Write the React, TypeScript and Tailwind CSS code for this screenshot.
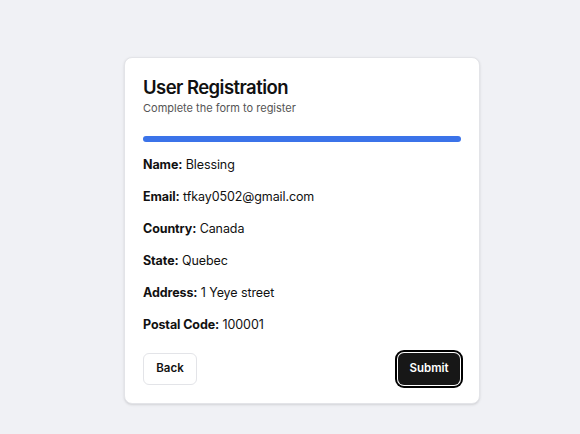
import React from "react";

const rows = [
  { label: "Name", value: "Blessing" },
  { label: "Email", value: "tfkay0502@gmail.com" },
  { label: "Country", value: "Canada" },
  { label: "State", value: "Quebec" },
  { label: "Address", value: "1 Yeye street" },
  { label: "Postal Code", value: "100001" },
];

export default function App() {
  return (
    <div
      className="min-h-[434px] w-full bg-[#f0f1f5] flex justify-center pl-[24px] pt-[57px]"
      style={{ fontFamily: "Inter, 'Noto Sans', sans-serif" }}
    >
      <div className="w-[356px] h-[347px] bg-white border border-[#e3e4e8] rounded-lg shadow-sm p-[18px] flex flex-col">
        <h1 className="text-[18.5px] leading-[22px] font-semibold tracking-[-0.03em] text-[#111]">
          User Registration
        </h1>
        <p className="mt-[2px] text-[11px] leading-[16px] text-[#555]">
          Complete the form to register
        </p>
        <div className="mt-[20px] h-[6px] w-full rounded-full bg-[#3b73e9]" />
        <div className="mt-[13px] flex flex-col gap-[12px]">
          {rows.map((r) => (
            <div key={r.label} className="text-[12.5px] leading-[20px] tracking-[-0.1px] text-[#111]">
              <span className="font-bold">{r.label}:</span> {r.value}
            </div>
          ))}
        </div>
        <div className="mt-auto flex justify-between items-center">
          <button className="h-[32px] w-[54px] rounded-md border border-[#e3e4e8] bg-white text-[11.5px] font-semibold text-[#111]">
            Back
          </button>
          <button className="h-[32px] w-[62px] rounded-md bg-[#171717] text-[11.5px] font-semibold text-white ring-2 ring-black ring-offset-1 mr-[1px]">
            Submit
          </button>
        </div>
      </div>
    </div>
  );
}
